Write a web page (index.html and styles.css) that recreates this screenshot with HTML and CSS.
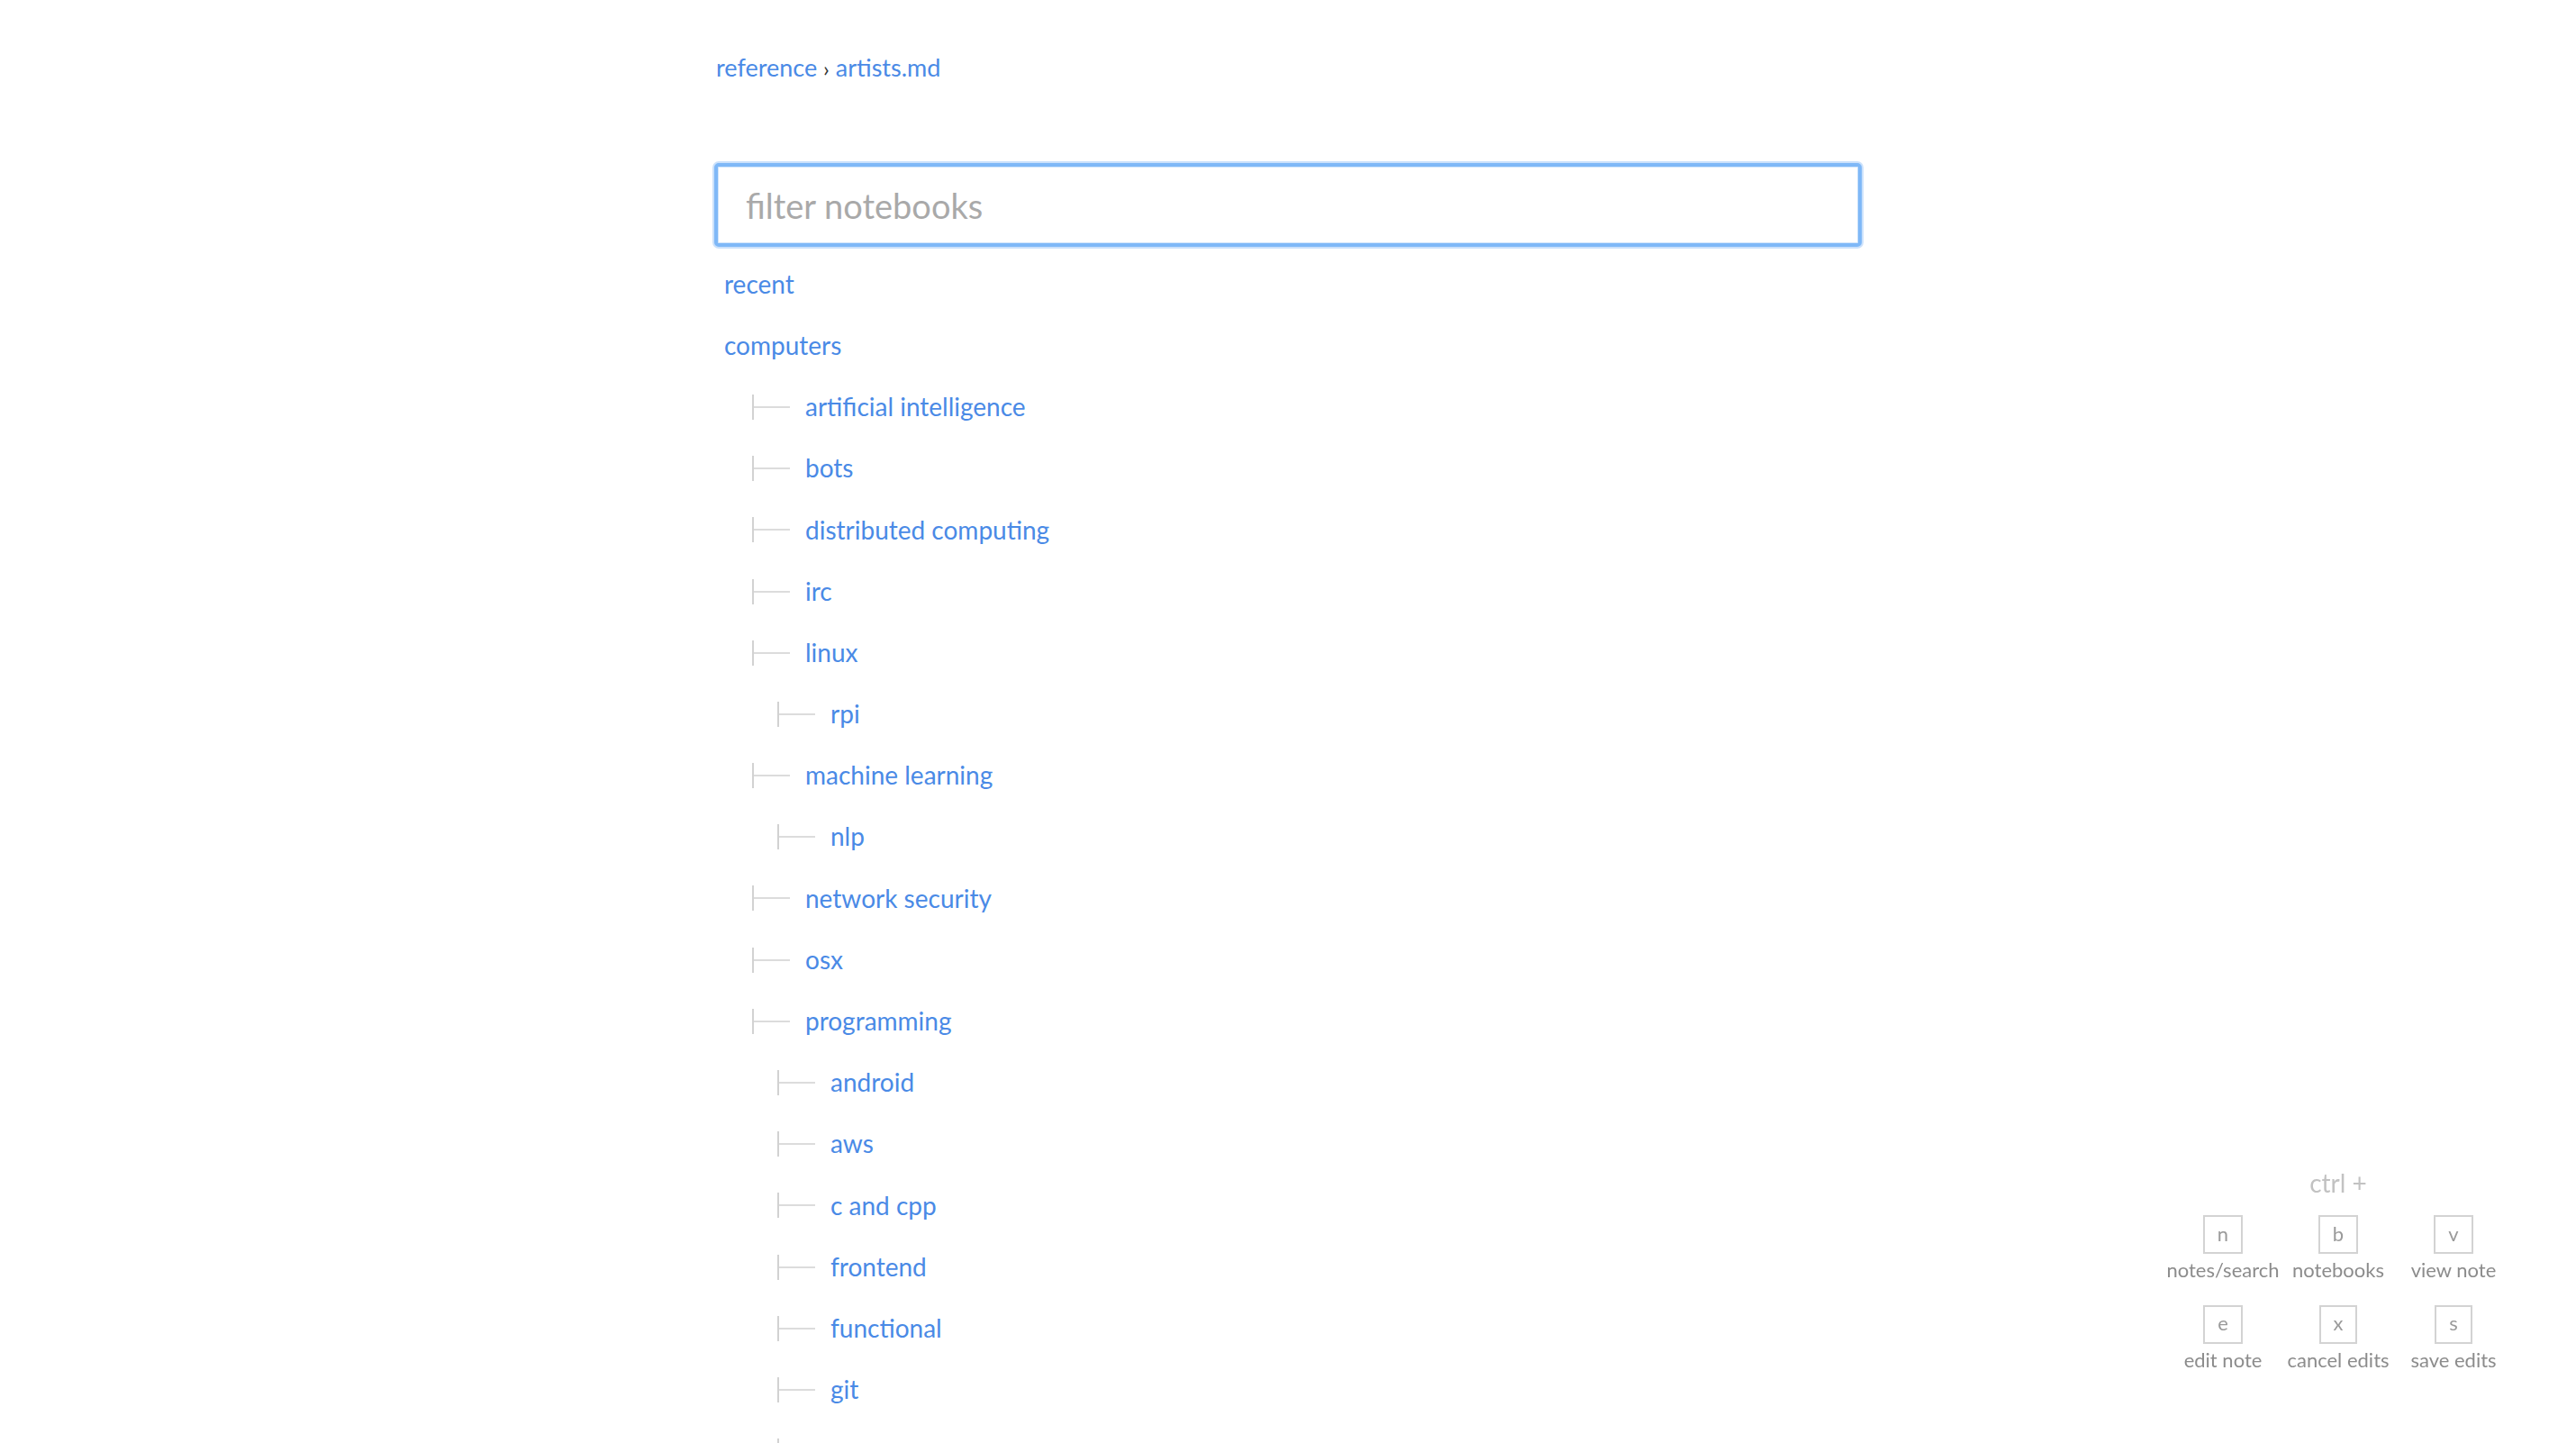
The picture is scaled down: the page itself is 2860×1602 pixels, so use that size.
FILE: index.html
```html
<!DOCTYPE html>
<html lang="en">
<head>
<meta charset="utf-8">
<title>notebooks</title>
<link rel="stylesheet" href="styles.css">
</head>
<body>
<div class="page">
  <nav class="crumbs"><a class="link" href="#">reference</a> <span class="sep">›</span> <a class="link" href="#">artists.md</a></nav>
  <input class="filter" type="text" placeholder="filter notebooks">
  <ul class="tree">
    <li class="row depth-0"><a class="link" href="#">recent</a></li>
    <li class="row depth-0"><a class="link" href="#">computers</a></li>
    <li class="row depth-1"><span class="branch"></span><a class="link" href="#">artificial intelligence</a></li>
    <li class="row depth-1"><span class="branch"></span><a class="link" href="#">bots</a></li>
    <li class="row depth-1"><span class="branch"></span><a class="link" href="#">distributed computing</a></li>
    <li class="row depth-1"><span class="branch"></span><a class="link" href="#">irc</a></li>
    <li class="row depth-1"><span class="branch"></span><a class="link" href="#">linux</a></li>
    <li class="row depth-2"><span class="branch"></span><a class="link" href="#">rpi</a></li>
    <li class="row depth-1"><span class="branch"></span><a class="link" href="#">machine learning</a></li>
    <li class="row depth-2"><span class="branch"></span><a class="link" href="#">nlp</a></li>
    <li class="row depth-1"><span class="branch"></span><a class="link" href="#">network security</a></li>
    <li class="row depth-1"><span class="branch"></span><a class="link" href="#">osx</a></li>
    <li class="row depth-1"><span class="branch"></span><a class="link" href="#">programming</a></li>
    <li class="row depth-2"><span class="branch"></span><a class="link" href="#">android</a></li>
    <li class="row depth-2"><span class="branch"></span><a class="link" href="#">aws</a></li>
    <li class="row depth-2"><span class="branch"></span><a class="link" href="#">c and cpp</a></li>
    <li class="row depth-2"><span class="branch"></span><a class="link" href="#">frontend</a></li>
    <li class="row depth-2"><span class="branch"></span><a class="link" href="#">functional</a></li>
    <li class="row depth-2"><span class="branch"></span><a class="link" href="#">git</a></li>
    <li class="row depth-2"><span class="branch"></span><a class="link" href="#">go</a></li>
  </ul>
</div>
<aside class="shortcuts">
  <div class="ctrl">ctrl +</div>
  <div class="keys">
    <div class="key"><span class="cap">n</span><span class="label">notes/search</span></div>
    <div class="key"><span class="cap">b</span><span class="label">notebooks</span></div>
    <div class="key"><span class="cap">v</span><span class="label">view note</span></div>
    <div class="key"><span class="cap">e</span><span class="label">edit note</span></div>
    <div class="key"><span class="cap">x</span><span class="label">cancel edits</span></div>
    <div class="key"><span class="cap">s</span><span class="label">save edits</span></div>
  </div>
</aside>
</body>
</html>
```
FILE: styles.css
```css
html, body {
  margin: 0;
  padding: 0;
  background: #ffffff;
}

body {
  font-family: "Lato", "Source Sans Pro", "Noto Sans", sans-serif;
  font-size: 28px;
  color: #333333;
  overflow: hidden;
  height: 1602px;
}

.page {
  width: 1274px;
  margin: 0 auto;
  padding-top: 59px;
}

.link {
  color: #4a8ae6;
  text-decoration: none;
}

.crumbs {
  font-size: 27px;
  line-height: 1.2;
  height: 34px;
  padding-left: 2px;
}

.sep {
  color: #333333;
  font-size: 24px;
}

.filter {
  display: block;
  box-sizing: border-box;
  width: 1274px;
  height: 93px;
  margin: 88px 0 0 0;
  padding: 0 31px;
  border: 4px solid #7fb8f7;
  border-radius: 5px;
  box-shadow: 0 0 0 2px #cbe1fb, inset 0 0 0 1px #d2e5fb;
  outline: none;
  font-family: inherit;
  font-size: 38px;
  color: #333333;
  background: #ffffff;
}

.filter::placeholder {
  color: #a9a9a9;
}

.tree {
  list-style: none;
  margin: 9px 0 0 0;
  padding: 0;
}

.row {
  box-sizing: border-box;
  height: 68.2px;
  padding-bottom: 3px;
  display: flex;
  align-items: center;
  line-height: 1.2;
  white-space: nowrap;
}

.depth-0 { padding-left: 11px; }
.depth-1 { padding-left: 42px; }
.depth-2 { padding-left: 70px; }

.branch {
  flex: none;
  position: relative;
  width: 42px;
  height: 28px;
  margin-right: 17px;
  border-left: 2px solid #d2d2d2;
  box-sizing: border-box;
}

.branch::after {
  content: "";
  position: absolute;
  left: 0;
  right: 0;
  top: 13px;
  height: 2px;
  background: #dcdcdc;
}

.shortcuts {
  position: fixed;
  right: 72px;
  bottom: 79px;
  width: 384px;
}

.ctrl {
  text-align: center;
  color: #c2c2c2;
  font-size: 28px;
  line-height: 1.2;
  margin-bottom: 19px;
}

.keys {
  display: grid;
  grid-template-columns: repeat(3, 128px);
  row-gap: 25px;
}

.key {
  display: flex;
  flex-direction: column;
  align-items: center;
}

.cap {
  box-sizing: border-box;
  height: 43px;
  min-width: 42px;
  padding: 0 14px 3px;
  border: 2px solid #d3d3d3;
  display: flex;
  align-items: center;
  justify-content: center;
  font-size: 22px;
  color: #9a9a9a;
}

.label {
  margin-top: 5px;
  font-size: 22px;
  line-height: 1.2;
  color: #8c8c8c;
  white-space: nowrap;
}
```
